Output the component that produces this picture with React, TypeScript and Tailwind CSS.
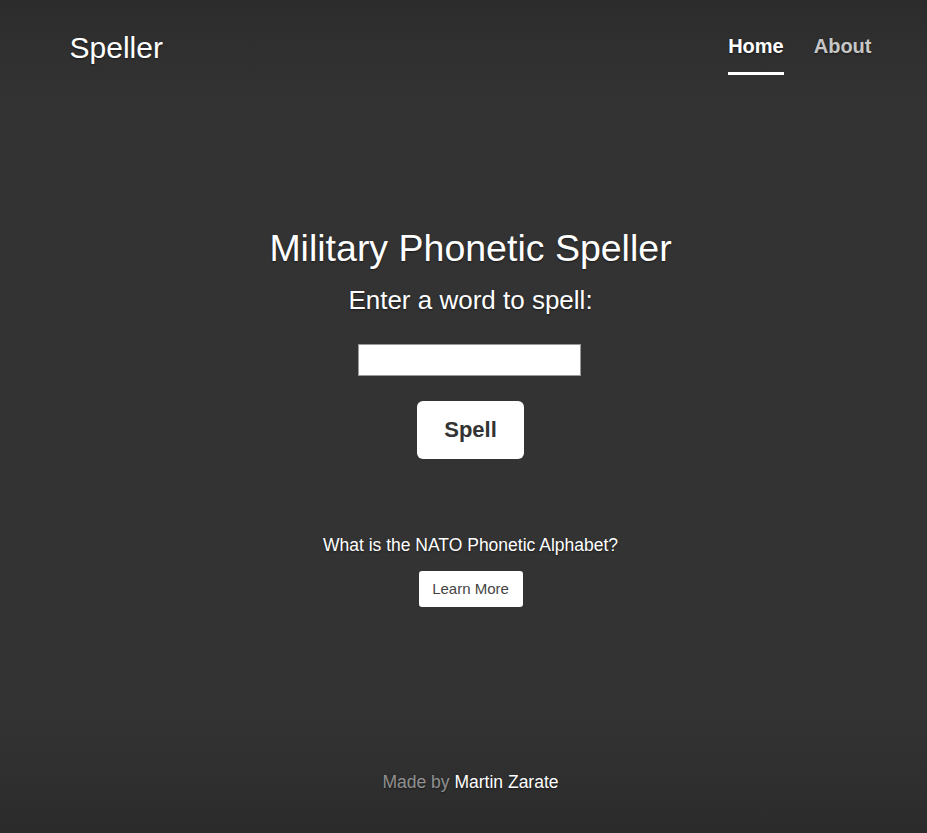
import { useState } from "react";

const navLinks = [
  { label: "Home", active: true },
  { label: "About", active: false },
];

export default function App() {
  const [word, setWord] = useState("");

  return (
    <div className="h-[833px] overflow-hidden bg-[linear-gradient(to_bottom,#2c2c2c_0%,#333_12%,#333_86%,#2b2b2b_100%)] pl-[14px] text-white font-['Liberation_Sans',Arial,sans-serif] [text-shadow:0_1px_2px_rgba(0,0,0,0.5)]">
      <div className="flex h-full flex-col items-center">
        {/* Masthead */}
        <header className="flex w-[802px] items-start justify-between pt-[30px]">
          <h3 className="text-[30px] leading-[36px] font-normal">Speller</h3>
          <nav className="mt-[4px] flex gap-[30px]">
            {navLinks.map((link) => (
              <a
                key={link.label}
                href="#"
                className={`border-b-[3px] pb-[14px] text-[20px] leading-[24px] font-bold ${
                  link.active ? "border-white text-white" : "border-transparent text-white/75"
                }`}
              >
                {link.label}
              </a>
            ))}
          </nav>
        </header>

        {/* Main */}
        <main className="mt-[151px] flex flex-col items-center text-center">
          <h1 className="text-[37.5px] leading-[45px] font-normal">Military Phonetic Speller</h1>
          <p className="mt-[14px] text-[26px] leading-[31px]">Enter a word to spell:</p>
          <input
            value={word}
            onChange={(e) => setWord(e.target.value)}
            className="mt-[28px] -ml-[3px] h-[32px] w-[223px] border border-[#999] bg-white px-2 text-[16px] text-[#333] outline-none"
          />
          <button className="mt-[25px] h-[58px] w-[107px] rounded-[6px] bg-white pb-[2px] text-[22px] font-bold text-[#333] [text-shadow:none]">
            Spell
          </button>

          <p className="mt-[76px] text-[17.5px] leading-[21px]">What is the NATO Phonetic Alphabet?</p>
          <button className="mt-[15px] h-[36px] w-[104px] rounded-[3px] bg-white text-[15px] text-[#444] [text-shadow:none]">
            Learn More
          </button>
        </main>

        {/* Footer */}
        <footer className="mt-[165px] text-[17.5px] leading-[21px]">
          <span className="text-white/50">Made by </span>
          <a href="#" className="text-white">
            Martin Zarate
          </a>
        </footer>
      </div>
    </div>
  );
}
